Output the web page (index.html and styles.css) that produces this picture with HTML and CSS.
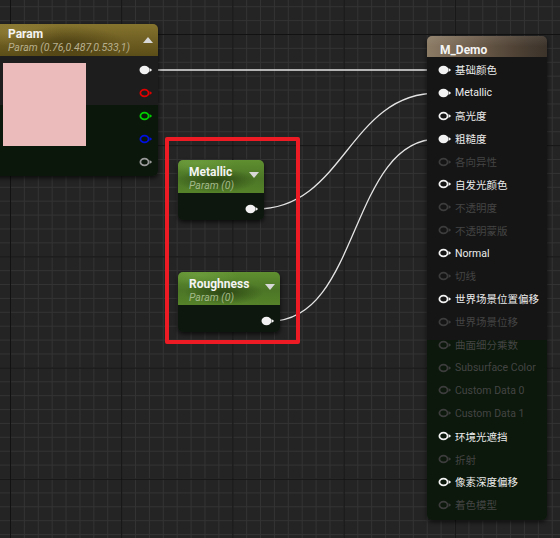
FILE: index.html
```html
<!DOCTYPE html>
<html>
<head>
<meta charset="utf-8">
<link rel="stylesheet" href="styles.css">
</head>
<body>
<div class="canvas">
  <svg class="wires" width="560" height="538" viewBox="0 0 560 538">
    <path d="M152 70 L438 70"/>
    <path d="M256 209 C345 209 348 93 438 93"/>
    <path d="M271 321 C360 321 350 139 438 139"/>
  </svg>

  <div class="node param">
    <div class="head">
      <div class="titles">
        <div class="title">Param</div>
        <div class="sub">Param (0.76,0.487,0.533,1)</div>
      </div>
      <span class="tri-up"></span>
    </div>
    <div class="pbody">
      <div class="swatch"></div>
      <div class="pins">
        <div class="prow"><svg class="pin white" viewBox="0 0 14 10"><ellipse class="fill" cx="5.5" cy="5" rx="5" ry="4.2"/><path d="M10.6 3 L13.2 5 L10.6 7Z"/></svg></div>
        <div class="prow"><svg class="pin pin-red" viewBox="0 0 14 10"><ellipse class="ring" cx="5.5" cy="5" rx="4.1" ry="3.4"/><path d="M10.6 3 L13.2 5 L10.6 7Z"/></svg></div>
        <div class="prow"><svg class="pin pin-green" viewBox="0 0 14 10"><ellipse class="ring" cx="5.5" cy="5" rx="4.1" ry="3.4"/><path d="M10.6 3 L13.2 5 L10.6 7Z"/></svg></div>
        <div class="prow"><svg class="pin pin-blue" viewBox="0 0 14 10"><ellipse class="ring" cx="5.5" cy="5" rx="4.1" ry="3.4"/><path d="M10.6 3 L13.2 5 L10.6 7Z"/></svg></div>
        <div class="prow"><svg class="pin pin-grey" viewBox="0 0 14 10"><ellipse class="ring" cx="5.5" cy="5" rx="4.1" ry="3.4"/><path d="M10.6 3 L13.2 5 L10.6 7Z"/></svg></div>
      </div>
    </div>
  </div>

  <div class="highlight"></div>

  <div class="node small metallic">
    <div class="head ghead">
      <div class="trow"><span class="title">Metallic</span><span class="tri-down"></span></div>
      <div class="sub gsub">Param (0)</div>
    </div>
    <div class="sbody">
      <svg class="pin white" viewBox="0 0 14 10"><ellipse class="fill" cx="5.5" cy="5" rx="5" ry="4.2"/><path d="M10.6 3 L13.2 5 L10.6 7Z"/></svg>
    </div>
  </div>

  <div class="node small roughness">
    <div class="head ghead">
      <div class="trow"><span class="title">Roughness</span><span class="tri-down"></span></div>
      <div class="sub gsub">Param (0)</div>
    </div>
    <div class="sbody">
      <svg class="pin white" viewBox="0 0 14 10"><ellipse class="fill" cx="5.5" cy="5" rx="5" ry="4.2"/><path d="M10.6 3 L13.2 5 L10.6 7Z"/></svg>
    </div>
  </div>

  <div class="node demo">
    <div class="dhead"><span class="title">M_Demo</span></div>
    <div class="dbody">
      <div class="row"><svg class="pin white" viewBox="0 0 14 10"><ellipse class="fill" cx="5.5" cy="5" rx="5" ry="4.2"/><path d="M10.6 3 L13.2 5 L10.6 7Z"/></svg><span>基础颜色</span></div>
      <div class="row"><svg class="pin white" viewBox="0 0 14 10"><ellipse class="fill" cx="5.5" cy="5" rx="5" ry="4.2"/><path d="M10.6 3 L13.2 5 L10.6 7Z"/></svg><span>Metallic</span></div>
      <div class="row"><svg class="pin white" viewBox="0 0 14 10"><ellipse class="ring" cx="5.5" cy="5" rx="4.1" ry="3.4"/><path d="M10.6 3 L13.2 5 L10.6 7Z"/></svg><span>高光度</span></div>
      <div class="row"><svg class="pin white" viewBox="0 0 14 10"><ellipse class="fill" cx="5.5" cy="5" rx="5" ry="4.2"/><path d="M10.6 3 L13.2 5 L10.6 7Z"/></svg><span>粗糙度</span></div>
      <div class="row dim"><svg class="pin" viewBox="0 0 14 10"><ellipse class="ring" cx="5.5" cy="5" rx="4.1" ry="3.4"/><path d="M10.6 3 L13.2 5 L10.6 7Z"/></svg><span>各向异性</span></div>
      <div class="row"><svg class="pin white" viewBox="0 0 14 10"><ellipse class="ring" cx="5.5" cy="5" rx="4.1" ry="3.4"/><path d="M10.6 3 L13.2 5 L10.6 7Z"/></svg><span>自发光颜色</span></div>
      <div class="row dim"><svg class="pin" viewBox="0 0 14 10"><ellipse class="ring" cx="5.5" cy="5" rx="4.1" ry="3.4"/><path d="M10.6 3 L13.2 5 L10.6 7Z"/></svg><span>不透明度</span></div>
      <div class="row dim"><svg class="pin" viewBox="0 0 14 10"><ellipse class="ring" cx="5.5" cy="5" rx="4.1" ry="3.4"/><path d="M10.6 3 L13.2 5 L10.6 7Z"/></svg><span>不透明蒙版</span></div>
      <div class="row"><svg class="pin white" viewBox="0 0 14 10"><ellipse class="ring" cx="5.5" cy="5" rx="4.1" ry="3.4"/><path d="M10.6 3 L13.2 5 L10.6 7Z"/></svg><span>Normal</span></div>
      <div class="row dim"><svg class="pin" viewBox="0 0 14 10"><ellipse class="ring" cx="5.5" cy="5" rx="4.1" ry="3.4"/><path d="M10.6 3 L13.2 5 L10.6 7Z"/></svg><span>切线</span></div>
      <div class="row"><svg class="pin white" viewBox="0 0 14 10"><ellipse class="ring" cx="5.5" cy="5" rx="4.1" ry="3.4"/><path d="M10.6 3 L13.2 5 L10.6 7Z"/></svg><span>世界场景位置偏移</span></div>
      <div class="row dim"><svg class="pin" viewBox="0 0 14 10"><ellipse class="ring" cx="5.5" cy="5" rx="4.1" ry="3.4"/><path d="M10.6 3 L13.2 5 L10.6 7Z"/></svg><span>世界场景位移</span></div>
      <div class="row dim"><svg class="pin" viewBox="0 0 14 10"><ellipse class="ring" cx="5.5" cy="5" rx="4.1" ry="3.4"/><path d="M10.6 3 L13.2 5 L10.6 7Z"/></svg><span>曲面细分乘数</span></div>
      <div class="row dim"><svg class="pin" viewBox="0 0 14 10"><ellipse class="ring" cx="5.5" cy="5" rx="4.1" ry="3.4"/><path d="M10.6 3 L13.2 5 L10.6 7Z"/></svg><span>Subsurface Color</span></div>
      <div class="row dim"><svg class="pin" viewBox="0 0 14 10"><ellipse class="ring" cx="5.5" cy="5" rx="4.1" ry="3.4"/><path d="M10.6 3 L13.2 5 L10.6 7Z"/></svg><span>Custom Data 0</span></div>
      <div class="row dim"><svg class="pin" viewBox="0 0 14 10"><ellipse class="ring" cx="5.5" cy="5" rx="4.1" ry="3.4"/><path d="M10.6 3 L13.2 5 L10.6 7Z"/></svg><span>Custom Data 1</span></div>
      <div class="row"><svg class="pin white" viewBox="0 0 14 10"><ellipse class="ring" cx="5.5" cy="5" rx="4.1" ry="3.4"/><path d="M10.6 3 L13.2 5 L10.6 7Z"/></svg><span>环境光遮挡</span></div>
      <div class="row dim"><svg class="pin" viewBox="0 0 14 10"><ellipse class="ring" cx="5.5" cy="5" rx="4.1" ry="3.4"/><path d="M10.6 3 L13.2 5 L10.6 7Z"/></svg><span>折射</span></div>
      <div class="row"><svg class="pin white" viewBox="0 0 14 10"><ellipse class="ring" cx="5.5" cy="5" rx="4.1" ry="3.4"/><path d="M10.6 3 L13.2 5 L10.6 7Z"/></svg><span>像素深度偏移</span></div>
      <div class="row dim"><svg class="pin" viewBox="0 0 14 10"><ellipse class="ring" cx="5.5" cy="5" rx="4.1" ry="3.4"/><path d="M10.6 3 L13.2 5 L10.6 7Z"/></svg><span>着色模型</span></div>
    </div>
  </div>
</div>
</body>
</html>
```

FILE: styles.css
```css
* { box-sizing: border-box; }
html, body { margin: 0; padding: 0; }
body {
  width: 560px;
  height: 538px;
  overflow: hidden;
  font-family: Roboto, "Noto Sans CJK SC", sans-serif;
  color: #e6e6e6;
}
.canvas {
  position: relative;
  width: 560px;
  height: 538px;
  overflow: hidden;
  background-color: #242424;
  background-image:
    linear-gradient(to right, #121212 1px, transparent 1px),
    linear-gradient(to bottom, #121212 1px, transparent 1px),
    linear-gradient(to right, #333333 1px, transparent 1px),
    linear-gradient(to bottom, #333333 1px, transparent 1px);
  background-size: 111.2px 111.2px, 111.2px 111.2px, 13.9px 13.9px, 13.9px 13.9px;
  background-position: 10px 34px, 10px 34px, 10px 34px, 10px 34px;
}
.wires {
  position: absolute;
  left: 0;
  top: 0;
}
.wires path {
  fill: none;
  stroke: #e4e4e4;
  stroke-width: 1.3;
}
.node {
  position: absolute;
  border-radius: 5px;
  overflow: hidden;
  box-shadow: 0 2px 4px rgba(0, 0, 0, 0.7);
}
.title {
  font-weight: bold;
  font-size: 12px;
  line-height: 14px;
  color: #f4f4f4;
}
.sub {
  font-style: italic;
  font-size: 10.5px;
  line-height: 14px;
}

/* Param node */
.param {
  left: -8px;
  top: 24px;
  width: 166px;
}
.param .head {
  height: 32px;
  display: flex;
  justify-content: space-between;
  align-items: center;
  padding: 2px 5px 0 16px;
  background:
    radial-gradient(ellipse 60px 18px at 75px 20px, rgba(50, 40, 8, 0.5), transparent),
    radial-gradient(ellipse 50px 14px at 20px 8px, rgba(170, 150, 70, 0.35), transparent),
    linear-gradient(to bottom, #85742e 0%, #6e5e22 55%, #5c4e18 100%);
}
.param .sub { color: #b8b08e; }
.tri-up {
  width: 0;
  height: 0;
  border-left: 5px solid transparent;
  border-right: 5px solid transparent;
  border-bottom: 6px solid #d8d8d8;
  margin-bottom: 2px;
}
.pbody {
  display: flex;
  background: linear-gradient(to bottom, #1d1d1d 0, #1d1d1d 49px, #0c170c 49px, #0c170c 100%);
  padding: 2.5px 5.5px 2.5px 0;
}
.swatch {
  width: 83px;
  height: 83px;
  margin: 4.5px 0 0 11px;
  background: #ebbaba;
}
.pins {
  margin-left: auto;
  display: flex;
  flex-direction: column;
}
.prow {
  height: 23px;
  display: flex;
  align-items: center;
}

/* pins */
.pin {
  width: 14px;
  height: 10px;
  flex: none;
  color: #3c3c3c;
}
.pin .fill { fill: currentColor; }
.pin .ring { fill: none; stroke: currentColor; stroke-width: 1.8; }
.pin path { fill: currentColor; }
.pin.white { color: #f2f2f2; }
.pin-red { color: #e00000; }
.pin-green { color: #00d000; }
.pin-blue { color: #0010e0; }
.pin-grey { color: #9a9a9a; }

/* highlight box */
.highlight {
  position: absolute;
  left: 165px;
  top: 137px;
  width: 135px;
  height: 207px;
  border: 4.5px solid #ed1c24;
  border-radius: 2px;
}

/* small param nodes */
.small .head {
  height: 33px;
  padding: 5px 5px 0 11px;
}
.ghead {
  background:
    radial-gradient(ellipse 40px 12px at 45% 62%, rgba(30, 50, 12, 0.7), transparent),
    radial-gradient(ellipse 40px 10px at 20% 10%, rgba(140, 190, 90, 0.3), transparent),
    linear-gradient(to bottom, #5f8f30 0%, #4c7626 55%, #558229 100%);
}
.trow {
  display: flex;
  justify-content: space-between;
  align-items: center;
}
.tri-down {
  width: 0;
  height: 0;
  border-left: 5px solid transparent;
  border-right: 5px solid transparent;
  border-top: 6px solid #d8d8d8;
  margin-top: 6px;
}
.gsub { color: #a3b98a; }
.sbody {
  height: 27px;
  background: #0d170d;
  display: flex;
  justify-content: flex-end;
  align-items: center;
  padding: 5px 5.5px 0 0;
}
.metallic {
  left: 178px;
  top: 160px;
  width: 86px;
}
.roughness {
  left: 178px;
  top: 272px;
  width: 102px;
}

/* M_Demo */
.demo {
  left: 427px;
  top: 36px;
  width: 120px;
}
.dhead {
  height: 21px;
  padding: 3px 0 0 13px;
  background:
    linear-gradient(to bottom, rgba(255, 255, 255, 0.08), transparent 50%),
    linear-gradient(to right, #8c7c66 0%, #6c5c4a 40%, #4a3e32 80%, #3c332a 100%);
}
.dbody {
  padding: 1.5px 0 3.5px 10.5px;
  background: linear-gradient(to bottom, #151515 0, #151515 283px, #0b180b 283px, #0b180b 100%);
}
.row {
  height: 22.9px;
  display: flex;
  align-items: center;
  gap: 3.5px;
  font-size: 10.5px;
  color: #ececec;
  white-space: nowrap;
}
.row.dim { color: #444444; }
```
